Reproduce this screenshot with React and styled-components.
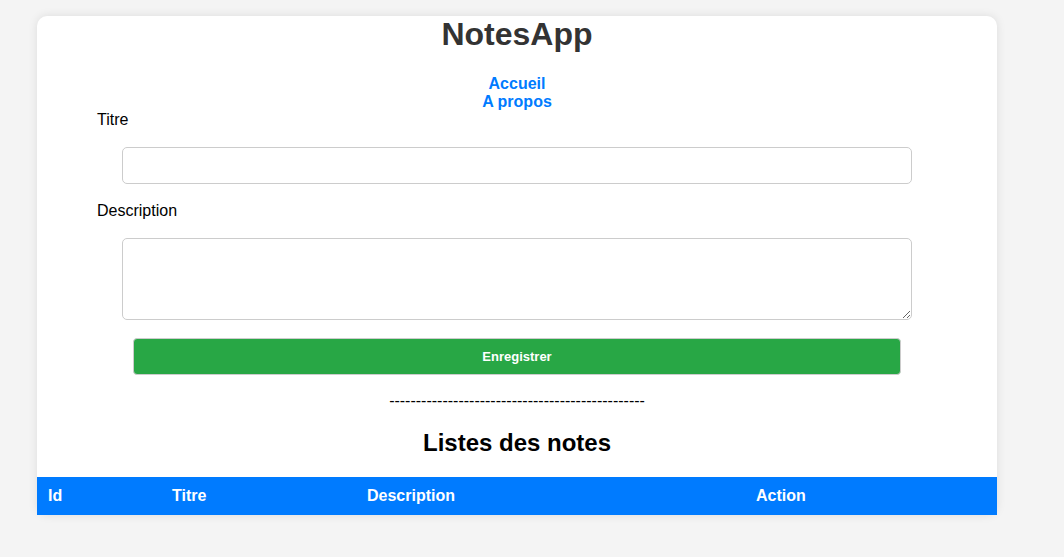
import React, { useState } from "react";
import styled, { createGlobalStyle } from "styled-components";

const GlobalStyle = createGlobalStyle`
  body {
    margin: 0;
    background: #f4f4f4;
    font-family: "Liberation Sans", Arial, sans-serif;
    color: #000;
  }
`;

const Page = styled.div`
  padding: 16px 0 40px 37px;
`;

const Card = styled.div`
  width: 960px;
  background: #fff;
  border-radius: 10px;
  box-shadow: 0 0 10px rgba(0, 0, 0, 0.1);
`;

const Title = styled.h1`
  margin: 0;
  font-size: 32px;
  line-height: 37px;
  color: #333;
  text-align: center;
`;

const Nav = styled.nav`
  margin-top: 22px;
  display: flex;
  flex-direction: column;
  align-items: center;
`;

const NavLink = styled.a`
  color: #007bff;
  font-weight: bold;
  font-size: 16px;
  line-height: 18px;
  text-decoration: none;
  cursor: pointer;
`;

const Form = styled.form`
  display: flex;
  flex-direction: column;
`;

const Label = styled.label`
  font-size: 16px;
  line-height: 18px;
  padding-left: 60px;
  margin-top: ${(p) => p.$top || 0}px;
`;

const Input = styled.input`
  box-sizing: border-box;
  width: 790px;
  height: 37px;
  margin: 18px 0 0 85px;
  padding: 10px;
  border: 1px solid #ccc;
  border-radius: 5px;
  font-family: inherit;
`;

const TextArea = styled.textarea`
  box-sizing: border-box;
  width: 790px;
  height: 82px;
  margin: 18px 0 0 85px;
  padding: 10px;
  border: 1px solid #ccc;
  border-radius: 5px;
  font-family: inherit;
`;

const SaveButton = styled.button`
  box-sizing: border-box;
  width: 768px;
  height: 37px;
  margin: 18px 0 0 96px;
  background: #28a745;
  color: #fff;
  font-family: inherit;
  font-size: 13px;
  font-weight: bold;
  border: 1px solid #ccc;
  border-radius: 4px;
  cursor: pointer;
`;

const Separator = styled.p`
  margin: 17px 0 0;
  font-size: 16px;
  line-height: 18px;
  text-align: center;
`;

const ListTitle = styled.h2`
  margin: 19px 0 0;
  font-size: 24px;
  line-height: 28px;
  text-align: center;
`;

const Table = styled.table`
  width: 960px;
  margin-top: 20px;
  border-collapse: collapse;
  table-layout: fixed;
`;

const HeadRow = styled.tr`
  background: #007bff;
`;

const HeadCell = styled.th`
  width: ${(p) => p.$w}px;
  box-sizing: border-box;
  padding: 10px 11px;
  color: #fff;
  font-size: 16px;
  line-height: 18px;
  font-weight: bold;
  text-align: left;
`;

const columns = [
  { label: "Id", w: 124 },
  { label: "Titre", w: 195 },
  { label: "Description", w: 389 },
  { label: "Action", w: 252 },
];

export default function App() {
  const [titre, setTitre] = useState("");
  const [description, setDescription] = useState("");

  return (
    <>
      <GlobalStyle />
      <Page>
        <Card>
          <Title>NotesApp</Title>
          <Nav>
            <NavLink>Accueil</NavLink>
            <NavLink>A propos</NavLink>
          </Nav>
          <Form onSubmit={(e) => e.preventDefault()}>
            <Label>Titre</Label>
            <Input value={titre} onChange={(e) => setTitre(e.target.value)} />
            <Label $top={18}>Description</Label>
            <TextArea
              value={description}
              onChange={(e) => setDescription(e.target.value)}
            />
            <SaveButton type="submit">Enregistrer</SaveButton>
          </Form>
          <Separator>------------------------------------------------</Separator>
          <ListTitle>Listes des notes</ListTitle>
          <Table>
            <thead>
              <HeadRow>
                {columns.map((c) => (
                  <HeadCell key={c.label} $w={c.w}>
                    {c.label}
                  </HeadCell>
                ))}
              </HeadRow>
            </thead>
            <tbody />
          </Table>
        </Card>
      </Page>
    </>
  );
}
